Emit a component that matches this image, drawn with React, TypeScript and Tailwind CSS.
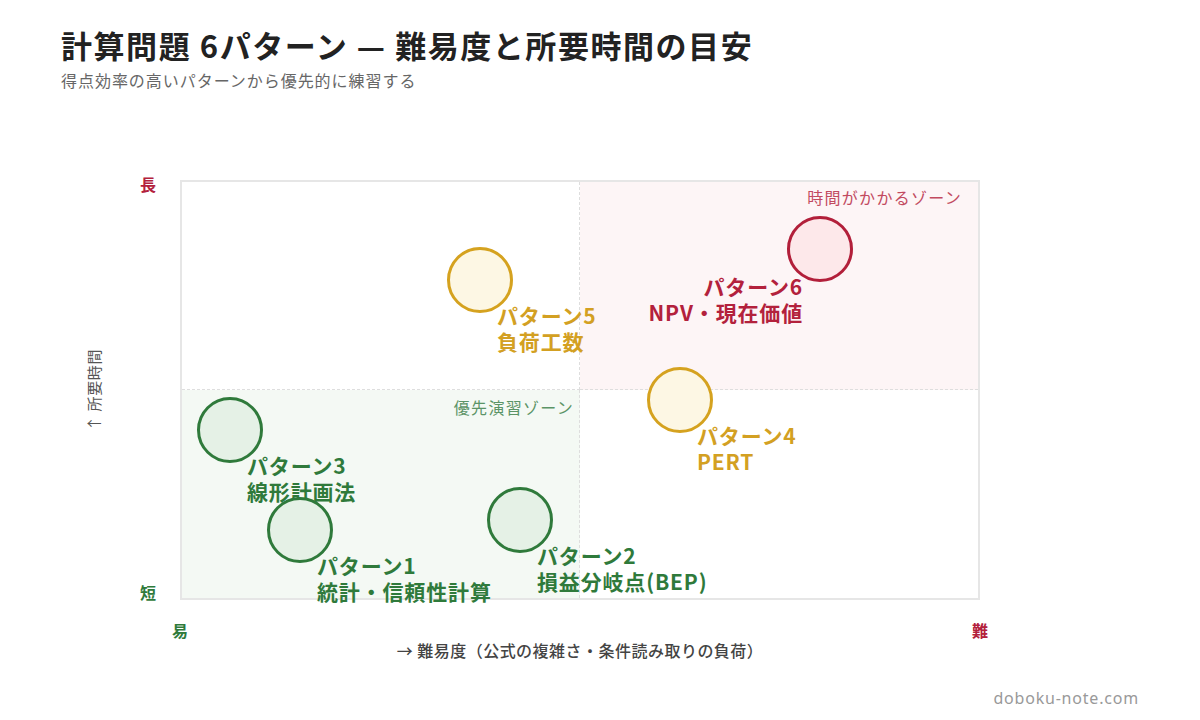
type Pattern = {
  title: string
  name: string
  circle: string
  label: string
  tone: string
}

const patterns: Pattern[] = [
  {
    title: "パターン5",
    name: "負荷工数",
    circle: "left-[265px] top-[65px] border-[#d5a21f] bg-[#fdf7e4]",
    label: "left-[315px] top-[120px]",
    tone: "text-[#d3a022]",
  },
  {
    title: "パターン6",
    name: "NPV・現在価値",
    circle: "left-[605px] top-[34px] border-[#b21f3a] bg-[#fde8ea]",
    label: "right-[175px] top-[91px] text-right",
    tone: "text-[#b3213c]",
  },
  {
    title: "パターン4",
    name: "PERT",
    circle: "left-[465px] top-[185px] border-[#d5a21f] bg-[#fdf7e4]",
    label: "left-[515px] top-[240px]",
    tone: "text-[#d3a022]",
  },
  {
    title: "パターン3",
    name: "線形計画法",
    circle: "left-[15px] top-[215px] border-[#2f7a3b] bg-[#e5f1e6]",
    label: "left-[65px] top-[270px]",
    tone: "text-[#2f7a3b]",
  },
  {
    title: "パターン1",
    name: "統計・信頼性計算",
    circle: "left-[85px] top-[315px] border-[#2f7a3b] bg-[#e5f1e6]",
    label: "left-[135px] top-[370px]",
    tone: "text-[#2f7a3b]",
  },
  {
    title: "パターン2",
    name: "損益分岐点(BEP)",
    circle: "left-[305px] top-[305px] border-[#2f7a3b] bg-[#e5f1e6]",
    label: "left-[355px] top-[360px]",
    tone: "text-[#2f7a3b]",
  },
]

export default function App() {
  return (
    <div className="w-[1200px] h-[720px] bg-white px-[61px] pt-[25px] font-['Noto_Sans_CJK_JP','Noto_Sans',sans-serif] overflow-hidden">
      {/* Header */}
      <h1 className="text-[31px] leading-[40px] font-bold text-[#222] tracking-[0.05em]">
        計算問題 6パターン — 難易度と所要時間の目安
      </h1>
      <p className="mt-[3px] text-[16px] leading-[24px] text-[#666] tracking-[0.06em]">
        得点効率の高いパターンから優先的に練習する
      </p>

      {/* Chart */}
      <div className="mt-[88px] flex items-start">
        {/* Y caption */}
        <div className="w-[66px] h-[420px] flex items-center justify-center">
          <span className="-rotate-90 whitespace-nowrap text-[15px] leading-[20px] text-[#555] tracking-[0.04em]">
            ↑ 所要時間
          </span>
        </div>

        {/* 長 / 短 */}
        <div className="ml-[13px] -mt-[4px] w-[16px] h-[424px] flex flex-col justify-between text-[16px] leading-[16px] font-bold">
          <span className="text-[#b3213c]">長</span>
          <span className="text-[#2f7a3b]">短</span>
        </div>

        <div className="ml-[24px] w-[800px]">
          {/* Plot */}
          <div className="relative w-[800px] h-[420px] border-2 border-[#e6e6e6] grid grid-cols-2 grid-rows-2">
            <div className="border-r border-b border-dashed border-[#dedede]" />
            <div className="border-b border-dashed border-[#dedede] bg-[#fdf5f6] flex justify-end items-start pr-[16px] pt-[5px]">
              <span className="text-[16px] leading-[20px] text-[#c24a5f] tracking-[0.08em]">時間がかかるゾーン</span>
            </div>
            <div className="border-r border-dashed border-[#dedede] bg-[#f4f9f4] flex justify-end items-start pr-[5px] pt-[7px]">
              <span className="text-[16px] leading-[20px] text-[#5b9466] tracking-[0.08em]">優先演習ゾーン</span>
            </div>
            <div />

            {patterns.map((p) => (
              <div key={p.title}>
                <div className={`absolute w-[66px] h-[66px] rounded-full border-[3px] ${p.circle}`} />
                <div className={`absolute whitespace-nowrap text-[21px] leading-[26px] font-semibold tracking-[0.04em] ${p.tone} ${p.label}`}>
                  <div>{p.title}</div>
                  <div>{p.name}</div>
                </div>
              </div>
            ))}
          </div>

          {/* 易 / 難 */}
          <div className="-mx-[8px] mt-[22px] flex justify-between text-[16px] leading-[16px] font-bold">
            <span className="text-[#2f7a3b]">易</span>
            <span className="text-[#b3213c]">難</span>
          </div>
          <div className="mt-[2px] text-center text-[16px] leading-[20px] font-medium text-[#444] tracking-[0.03em]">
            → 難易度（公式の複雑さ・条件読み取りの負荷）
          </div>
        </div>
      </div>

      {/* Footer */}
      <div className="mt-[28px] flex justify-end text-[16px] leading-[20px] text-[#999] tracking-[0.05em] font-['Noto_Sans',sans-serif]">
        doboku-note.com
      </div>
    </div>
  )
}
